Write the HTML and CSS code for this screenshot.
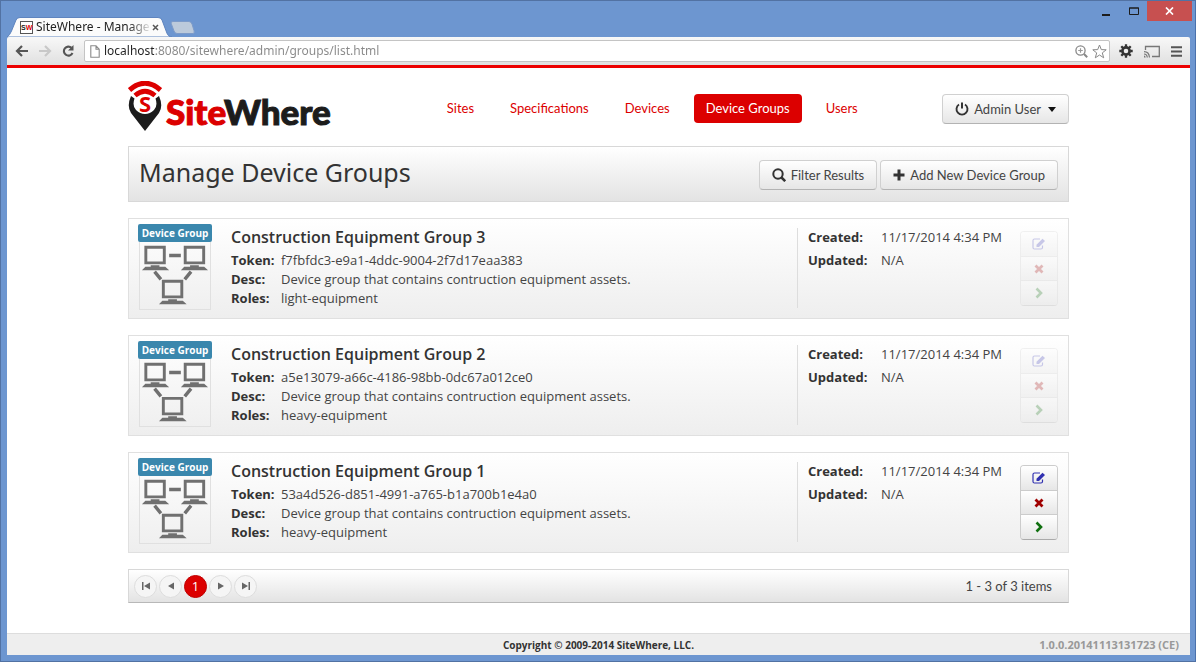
FILE: index.html
```html
<!DOCTYPE html>
<html lang="en">
<head>
<meta charset="utf-8">
<title>SiteWhere - Manage Device Groups</title>
<link rel="stylesheet" href="styles.css">
</head>
<body>
<svg class="sprite" aria-hidden="true">
  <symbol id="network" viewBox="0 0 72 68">
    <g fill="none" stroke="#707070" stroke-width="3"><path d="M6 5h19v16H6zM46.500 5h19v16h-19zM24 40h19v16H24z"/><path d="M30 13.500h12M15 30l6.500 8M52.500 30L46 38" stroke-width="3.500"/></g>
    <g fill="#707070"><path d="M11 23.500h9v1.500h6l4 3.500H2L5.500 25H11zM51.500 23.500h9v1.500H66l4 3.500H42l3.500-3.500h6zM29 58.500h9V60h6l4 3.500H19.500L23 60h6z"/></g>
  </symbol>
  <symbol id="edit" viewBox="0 0 14 12"><path d="M10.500 7.500v2q0 1.500-1.500 1.500H2.500Q1 11 1 9.500v-7Q1 1 2.500 1H8" fill="none" stroke="currentColor" stroke-width="1.200"/><path d="M4.500 9V6.700L10.500.7l2.500 2.200L7 9z" fill="currentColor"/></symbol>
  <symbol id="remove" viewBox="0 0 14 12"><path d="M3.500 2.500l7 7M10.500 2.500l-7 7" stroke="currentColor" stroke-width="2.800"/></symbol>
  <symbol id="open" viewBox="0 0 14 12"><path d="M4.500 1.500L9 6l-4.500 4.500" fill="none" stroke="currentColor" stroke-width="2.600"/></symbol>
</svg>
<div class="window">
  <header class="titlebar">
    <div class="tab">
      <svg class="tab-shape" viewBox="0 0 166 20" preserveAspectRatio="none" aria-hidden="true"><path d="M0 20Q3 18 4.500 14L9 3Q10 .5 13 .5H151Q154 .5 155 3L159.500 15Q161 20 165 20z" fill="#fbfbfb" stroke="#5e84bf" stroke-width="1"/></svg>
      <span class="favicon"><span class="fav-s">S</span><span class="fav-w">W</span></span>
      <span class="tab-title">SiteWhere - Manage</span>
      <button class="tab-close" aria-label="Close tab"><svg width="7" height="7" viewBox="0 0 7 7"><path d="M1 1l5 5M6 1L1 6" stroke="#555" stroke-width="1.500"/></svg></button>
    </div>
    <button class="new-tab" aria-label="New tab"><svg width="26" height="13" viewBox="0 0 26 13"><path d="M1 2Q1 .5 3 .5H19Q21 .5 22 3l2 6.500Q25 12.500 23 12.500H7Q5 12.500 4 10z" fill="#bccadb" stroke="#7d9bc9"/></svg></button>
    <div class="controls">
      <button class="ctl" aria-label="Minimize"><svg width="9" height="12" viewBox="0 0 9 12"><path d="M0 9h8v2H0z" fill="#1c1c1c"/></svg></button>
      <button class="ctl" aria-label="Maximize"><svg width="10" height="8" viewBox="0 0 10 8"><path d="M.5 1h9v6.500h-9zM0 1h10" fill="none" stroke="#1c1c1c"/></svg></button>
      <button class="ctl close" aria-label="Close"><svg width="9" height="8" viewBox="0 0 9 8"><path d="M1 .5l7 7M8 .5l-7 7" stroke="#fff" stroke-width="1.700"/></svg></button>
    </div>
  </header>
  <div class="toolbar">
    <button class="tool" aria-label="Back"><svg width="14" height="12" viewBox="0 0 14 12"><path d="M13 6H2M7 1L2 6l5 5" fill="none" stroke="#555" stroke-width="2.200"/></svg></button>
    <button class="tool" aria-label="Forward"><svg width="14" height="12" viewBox="0 0 14 12"><path d="M1 6h11M7 1l5 5-5 5" fill="none" stroke="#c8c8c8" stroke-width="2.200"/></svg></button>
    <button class="tool" aria-label="Reload"><svg width="14" height="12" viewBox="0 0 14 12"><path d="M10.500 2.800A4.500 4.500 0 1 0 11.500 8" fill="none" stroke="#555" stroke-width="2.100"/><path d="M12.500 0v5.500H7z" fill="#555"/></svg></button>
    <div class="address">
      <svg width="10" height="13" viewBox="0 0 10 13"><path d="M.8.800h5.200l3.200 3.500v8H.8zM6 .8v3.500h3.200" fill="none" stroke="#8a8a8a" stroke-width="1.100"/></svg>
      <input class="url" type="text" aria-label="Address" value="localhost:8080/sitewhere/admin/groups/list.html">
      <svg width="13" height="13" viewBox="0 0 13 13"><circle cx="5.500" cy="5.500" r="4.600" fill="none" stroke="#888" stroke-width="1.300"/><path d="M5.500 3.200v4.600M3.200 5.500h4.600" stroke="#999" stroke-width="1.200"/><path d="M9 9l3.200 3.200" stroke="#888" stroke-width="2"/></svg>
      <svg width="15" height="15" viewBox="0 0 15 15"><path d="M7.500 1l1.800 4.600 4.900.2-3.900 3.100 1.400 4.900-4.200-2.800-4.200 2.800 1.400-4.900L.8 5.800l4.900-.2z" fill="#fff" stroke="#888"/></svg>
    </div>
    <div class="extras">
      <button class="tool" aria-label="Settings"><svg width="14" height="14" viewBox="0 0 14 14"><circle cx="7" cy="7" r="3.600" fill="none" stroke="#333" stroke-width="2.600"/><path d="M7 .3v2.500M7 11.200v2.500M.3 7h2.500M11.200 7h2.500M2.300 2.300L4 4M10 10l1.700 1.700M11.700 2.300L10 4M4 10l-1.700 1.700" stroke="#333" stroke-width="2.300"/></svg></button>
      <button class="tool" aria-label="Cast"><svg width="16" height="13" viewBox="0 0 16 13"><path d="M1.500 5V1.500h13.800v10H8" fill="none" stroke="#777" stroke-width="1.300"/><path d="M0 6.700q5 0 5.500 5.800M0 9q3 0 3.300 3.500" fill="none" stroke="#777" stroke-width="1.200"/><path d="M0 10.500q1.500 0 1.700 2H0z" fill="#777"/></svg></button>
      <button class="tool" aria-label="Menu"><svg width="11" height="11" viewBox="0 0 11 11"><path d="M0 1.300h11M0 5.500h11M0 9.700h11" stroke="#555" stroke-width="2"/></svg></button>
    </div>
  </div>
  <div class="page">
    <main class="container">
      <div class="top">
        <a class="logo" href="#" aria-label="SiteWhere">
          <svg width="34" height="50" viewBox="0 0 34 50" aria-hidden="true">
            <path d="M3 15Q-1.500 25 3 32L17 50 31 32Q35.500 25 31 15L27.500 17.500Q30 25 26 29 22 33 17 33T8 29Q4 25 6.500 17.500z" fill="#1c1c1c"/>
            <path d="M1.500 9Q17-4.500 32.500 9" fill="none" stroke="#dc0000" stroke-width="5"/>
            <path d="M7 14.500Q17 6 27 14.500" fill="none" stroke="#dc0000" stroke-width="4.800"/>
            <text class="pin-letter" x="17" y="31" text-anchor="middle">S</text>
          </svg>
          <span class="wordmark"><span class="site">Site</span>Where</span>
        </a>
        <nav class="nav">
          <a href="#">Sites</a><a href="#">Specifications</a><a href="#">Devices</a><a class="active" href="#">Device Groups</a><a href="#">Users</a>
        </nav>
        <button class="btn user"><svg width="14" height="14" viewBox="0 0 14 14"><path d="M4 2.500a5.500 5.500 0 1 0 6 0" fill="none" stroke="#333" stroke-width="1.900"/><path d="M7 .5v6" stroke="#333" stroke-width="2"/></svg>Admin User<svg class="caret" width="8" height="5" viewBox="0 0 8 5"><path d="M0 0h8L4 5z" fill="#111"/></svg></button>
      </div>
      <div class="heading">
        <h1>Manage Device Groups</h1>
        <div class="actions">
          <button class="btn"><svg width="14" height="14" viewBox="0 0 14 14"><circle cx="6" cy="6" r="4.700" fill="none" stroke="#333" stroke-width="2"/><path d="M9.500 9.500l3.700 3.700" stroke="#333" stroke-width="2.500"/></svg>Filter Results</button>
          <button class="btn"><svg width="12" height="12" viewBox="0 0 12 12"><path d="M6 .5v11M.5 6h11" stroke="#333" stroke-width="3"/></svg>Add New Device Group</button>
        </div>
      </div>
      <article class="card">
        <div class="thumb"><span class="tag">Device Group</span><svg class="net"><use href="#network"/></svg></div>
        <div class="info"><h2>Construction Equipment Group 3</h2>
          <dl><dt>Token:</dt><dd>f7fbfdc3-e9a1-4ddc-9004-2f7d17eaa383</dd><dt>Desc:</dt><dd>Device group that contains contruction equipment assets.</dd><dt>Roles:</dt><dd>light-equipment</dd></dl></div>
        <dl class="dates"><dt>Created:</dt><dd>11/17/2014 4:34 PM</dd><dt>Updated:</dt><dd>N/A</dd></dl>
        <div class="ops faded"><button class="edit" aria-label="Edit"><svg><use href="#edit"/></svg></button><button class="remove" aria-label="Delete"><svg><use href="#remove"/></svg></button><button class="open" aria-label="Open"><svg><use href="#open"/></svg></button></div>
      </article>
      <article class="card">
        <div class="thumb"><span class="tag">Device Group</span><svg class="net"><use href="#network"/></svg></div>
        <div class="info"><h2>Construction Equipment Group 2</h2>
          <dl><dt>Token:</dt><dd>a5e13079-a66c-4186-98bb-0dc67a012ce0</dd><dt>Desc:</dt><dd>Device group that contains contruction equipment assets.</dd><dt>Roles:</dt><dd>heavy-equipment</dd></dl></div>
        <dl class="dates"><dt>Created:</dt><dd>11/17/2014 4:34 PM</dd><dt>Updated:</dt><dd>N/A</dd></dl>
        <div class="ops faded"><button class="edit" aria-label="Edit"><svg><use href="#edit"/></svg></button><button class="remove" aria-label="Delete"><svg><use href="#remove"/></svg></button><button class="open" aria-label="Open"><svg><use href="#open"/></svg></button></div>
      </article>
      <article class="card">
        <div class="thumb"><span class="tag">Device Group</span><svg class="net"><use href="#network"/></svg></div>
        <div class="info"><h2>Construction Equipment Group 1</h2>
          <dl><dt>Token:</dt><dd>53a4d526-d851-4991-a765-b1a700b1e4a0</dd><dt>Desc:</dt><dd>Device group that contains contruction equipment assets.</dd><dt>Roles:</dt><dd>heavy-equipment</dd></dl></div>
        <dl class="dates"><dt>Created:</dt><dd>11/17/2014 4:34 PM</dd><dt>Updated:</dt><dd>N/A</dd></dl>
        <div class="ops"><button class="edit" aria-label="Edit"><svg><use href="#edit"/></svg></button><button class="remove" aria-label="Delete"><svg><use href="#remove"/></svg></button><button class="open" aria-label="Open"><svg><use href="#open"/></svg></button></div>
      </article>
      <div class="pager">
        <button aria-label="First page"><svg width="8" height="8" viewBox="0 0 8 8"><path d="M0 0h1.500v8H0zM8 .500v7L2 4z"/></svg></button>
        <button aria-label="Previous page"><svg width="8" height="8" viewBox="0 0 8 8"><path d="M7 .5v7L1 4z"/></svg></button>
        <button class="current">1</button>
        <button aria-label="Next page"><svg width="8" height="8" viewBox="0 0 8 8"><path d="M1 .5v7L7 4z"/></svg></button>
        <button aria-label="Last page"><svg width="8" height="8" viewBox="0 0 8 8"><path d="M6.500 0H8v8H6.500zM0 .5v7L6 4z"/></svg></button>
        <span class="count">1 - 3 of 3 items</span>
      </div>
    </main>
    <footer class="footer"><span class="copy">Copyright © 2009-2014 SiteWhere, LLC.</span><span class="version">1.0.0.20141113131723 (CE)</span></footer>
  </div>
</div>
</body>
</html>
```
FILE: styles.css
```css
* { box-sizing: border-box; }
body { margin: 0; font: 13px/19px "Open Sans", "Noto Sans", sans-serif; color: #444; }
button { font: inherit; color: inherit; margin: 0; padding: 0; border: 0; background: none; }
h1, h2, dl, dd { margin: 0; }
svg { flex: none; display: block; }
.sprite { position: absolute; width: 0; height: 0; }

.window { min-height: 100vh; display: flex; flex-direction: column; padding: 0 5px 6px 6px; background: #6d96d0; border: 1px solid #5272a3; border-right-color: #4a71ac; }
.titlebar { height: 36px; display: flex; align-items: flex-end; }
.tab { position: relative; width: 166px; height: 20px; display: flex; align-items: center; padding: 0 13px; font: 12px/20px "Noto Sans", sans-serif; color: #222; }
.tab-shape { position: absolute; inset: 0; width: 100%; height: 100%; }
.favicon, .tab-title, .tab-close { position: relative; }
.favicon { width: 13px; height: 13px; border: 1px solid #555; font: bold 7px/11px "Liberation Sans", sans-serif; text-align: center; background: #fff; white-space: nowrap; }
.fav-w, .site { color: #dc0000; }
.tab-title { flex: 1; margin-left: 3px; white-space: nowrap; overflow: hidden; -webkit-mask-image: linear-gradient(90deg, #000 80%, transparent); mask-image: linear-gradient(90deg, #000 80%, transparent); }
.tab-close { margin-right: 1px; }
.new-tab { padding-bottom: 3px; margin-left: -3px; }
.controls { margin-left: auto; align-self: flex-start; display: flex; margin-right: -2px; }
.ctl { width: 27px; height: 20px; display: grid; place-items: center; }
.ctl.close { width: 45px; background: #c75050; }

.toolbar { height: 31px; flex: none; display: flex; align-items: center; gap: 9px; padding: 2px 8px; border-bottom: 3px solid #ec0000; border-radius: 2px 2px 0 0; background: linear-gradient(#f8f8f8, #e0e0e0); }
.extras { display: flex; align-items: center; gap: 11px; }
.address { flex: 1; height: 22px; display: flex; align-items: center; gap: 4px; padding: 0 2px 0 5px; border: 1px solid #c4c4c4; border-radius: 2px; background: #fff; }
.url { flex: 1; min-width: 0; height: 20px; padding: 0; border: 0; outline: 0; font: 12px/20px "Noto Sans", sans-serif; color: transparent; background: linear-gradient(90deg, #222 50px, #888 50px); -webkit-background-clip: text; background-clip: text; }

.page { flex: 1; display: flex; flex-direction: column; background: #fff; }
.container { width: calc(100% - 32px); max-width: 941px; margin: 0 auto; }
.top { height: 78px; display: flex; align-items: center; padding-top: 4px; }
.logo { display: flex; align-items: center; gap: 4px; padding-bottom: 7px; text-decoration: none; color: #1c1c1c; }
.wordmark { font: 900 35px/44px "Lato", sans-serif; padding-top: 10px; -webkit-text-stroke: 1px currentColor; }
.pin-letter { font: bold 22px "Open Sans", sans-serif; fill: #dc0000; }
.nav, .btn, .count { font-family: "Lato", sans-serif; font-size: 13px; }
.nav { display: flex; gap: 12px; margin-left: 104px; padding-bottom: 2px; }
.nav a { padding: 5px 12px; border-radius: 4px; color: #dc0000; text-decoration: none; white-space: nowrap; }
.nav .active { background: #dc0000; color: #fff; }
.btn { height: 30px; display: flex; align-items: center; gap: 5px; padding: 0 12px; border: 1px solid #d0d0d0; border-bottom-color: #b3b3b3; border-radius: 4px; background: linear-gradient(#fff, #e6e6e6); white-space: nowrap; }
.user { margin-left: auto; }
.caret { margin-left: 2px; }
.heading { min-height: 56px; display: flex; align-items: center; justify-content: space-between; padding: 2px 10px 0; border: 1px solid #d8d8d8; background: linear-gradient(#fff, #e3e3e3); margin-bottom: 16px; }
h1 { font: 400 25px/36px "Noto Sans", sans-serif; color: #333; padding-bottom: 6px; }
.actions { display: flex; gap: 3px; }

.card { min-height: 101px; display: flex; padding: 5px 10px 8px 9px; margin-bottom: 16px; border: 1px solid #e0e0e0; background: linear-gradient(#fff, #eee); }
.thumb { width: 74px; display: flex; flex-direction: column; align-items: center; }
.tag { align-self: stretch; height: 18px; border-radius: 2px; background: #3a87ad; color: #fff; font-size: 10px; line-height: 18px; font-weight: 700; text-align: center; white-space: nowrap; }
.net { width: 72px; height: 68px; border: 1px solid #e0e0e0; border-top: 0; }
.info { flex: 1; margin-left: 19px; }
h2 { font-size: 16px; line-height: 26px; font-weight: 600; color: #333; padding-bottom: 1px; }
dl { display: grid; grid-template-columns: 50px 1fr; align-content: start; }
dt { font-weight: 700; color: #333; }
.dates { width: 223px; grid-template-columns: 73px 1fr; margin: 4px 0 2px; padding-left: 10px; border-left: 1px solid #ddd; }
.dates dt, .dates dd { height: 23px; line-height: 19px; }
.ops { width: 38px; height: 75px; margin-top: 7px; display: flex; flex-direction: column; border: 1px solid #ccc; border-bottom-color: #aaa; border-radius: 4px; overflow: hidden; }
.ops button { flex: 1; display: grid; place-items: center; background: linear-gradient(#fff, #e6e6e6); }
.ops button + button { border-top: 1px solid #ccc; }
.ops svg { width: 14px; height: 12px; }
.edit svg { color: #3030b0; }
.remove svg { color: #a00000; }
.open svg { color: #107010; }
.faded { opacity: .25; }

.pager { height: 34px; display: flex; align-items: center; gap: 2px; padding: 0 16px 0 5px; border: 1px solid #d8d8d8; border-bottom-color: #b8b8b8; background: linear-gradient(#fff, #e3e3e3); }
.pager button { width: 23px; height: 23px; border-radius: 50%; border: 1px solid #ddd; background: #f5f5f5; display: grid; place-items: center; }
.pager svg { fill: #666; }
.pager .current { background: #dc0000; border-color: #c00000; color: #fff; line-height: 20px; }
.count { margin-left: auto; }
.footer { height: 22px; margin-top: auto; display: grid; grid-template-columns: 1fr auto 1fr; align-items: center; padding: 0 11px; border-top: 1px solid #ddd; background: #eee; font-size: 11px; line-height: 20px; font-weight: 700; }
.copy { grid-column: 2; color: #333; font-size: 10px; }
.version { text-align: right; color: #999; }
```
